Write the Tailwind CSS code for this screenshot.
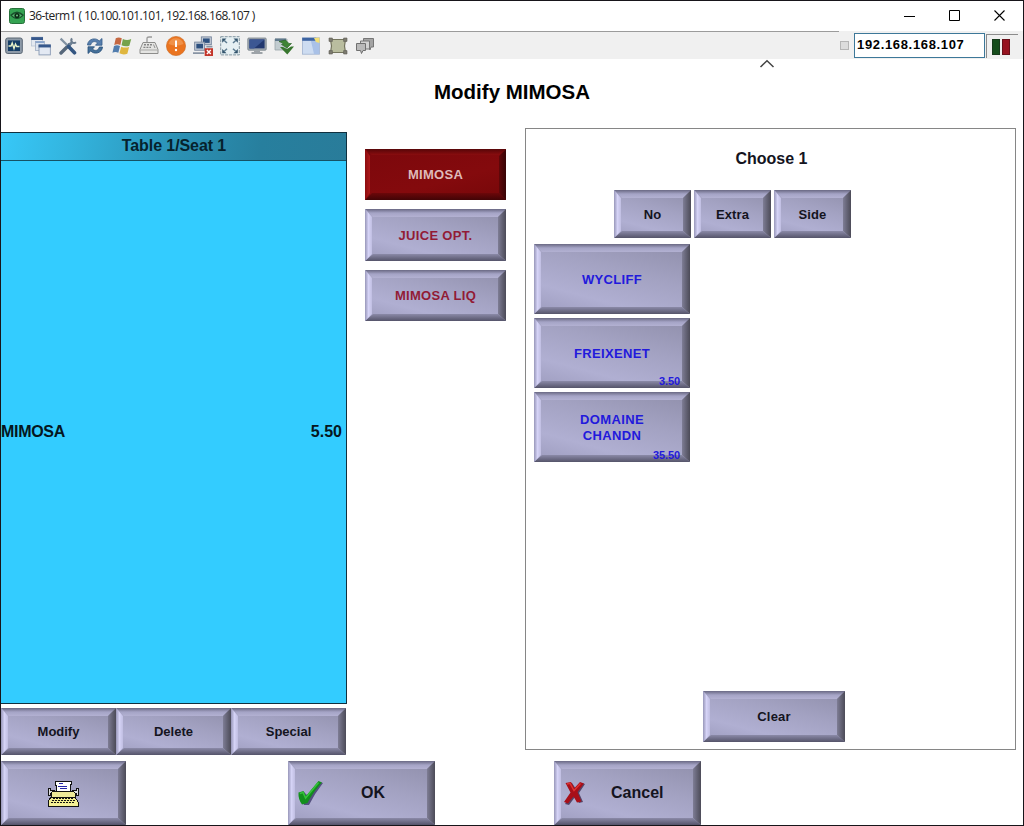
<!DOCTYPE html>
<html lang="en">
<head>
<meta charset="utf-8">
<title>36-term1</title>
<script src="https://cdn.jsdelivr.net/npm/@tailwindcss/browser@4"></script>
</head>
<body class="w-[1024px] h-[826px] overflow-hidden bg-white">
<div class="w-[1024px] h-[826px] border border-[#17151a] bg-white flex flex-col overflow-hidden font-['Liberation_Sans',Arial,sans-serif] text-[#14141e]">

  <!-- Window title bar -->
  <header class="h-[30px] shrink-0 flex items-center pl-2">
    <svg class="w-4 h-4 -mt-px" viewBox="0 0 16 16"><rect x=".5" y=".5" width="15" height="15" rx="2" fill="#35a352" stroke="#27713b"/><path d="M1 7Q8 0 15 7Q8 15 1 7Z" fill="#17512b"/><path d="M3 7.5Q8 3 13 7.5Q8 12 3 7.5Z" fill="#57b76f"/><circle cx="8" cy="7.5" r="2.6" fill="#0b2914"/><circle cx="8" cy="7.5" r="1" fill="#6bcb82"/></svg>
    <span class="ml-[4px] text-[12px] leading-4 tracking-[-0.57px] whitespace-pre text-[#222] font-['Open_Sans','Noto_Sans',sans-serif]">36-term1 ( 10.100.101.101, 192.168.168.107 )</span>
    <div class="ml-auto flex items-center mr-[18px] gap-[34px] -mt-[2px]">
      <svg class="w-[11px] h-[11px]" viewBox="0 0 11 11"><path d="M0 6.5H11" stroke="#000"/></svg>
      <svg class="w-[11px] h-[11px]" viewBox="0 0 11 11"><path d="M.5 .5H10.5V10.5H.5Z" fill="none" stroke="#000"/></svg>
      <svg class="w-[11px] h-[11px]" viewBox="0 0 11 11"><path d="M.5 .5L10.5 10.5M10.5 .5L.5 10.5" stroke="#000" stroke-width="1.1"/></svg>
    </div>
  </header>

  <!-- Toolbar -->
  <div class="h-[28px] shrink-0 bg-[#f0f0f0] flex">
    <div class="w-[838px] border-t border-[#9b9b9b] flex items-center pl-1 gap-[9px] [&>svg]:w-[18px] [&>svg]:h-[18px] [&>svg]:shrink-0">
      <svg viewBox="0 0 18 18"><rect x=".7" y="1" width="16.6" height="15.5" rx="2" fill="#8d9aa8" stroke="#5a6673"/><rect x="3" y="3.4" width="12" height="10.6" fill="#163e66"/><path d="M3.5 9H6L7.2 6L9 11.5L10.5 7L11.7 9.5H14.5" fill="none" stroke="#e8f2c8" stroke-width="1.4"/></svg>
      <svg class="!w-[20px] !h-[20px] -mx-px" viewBox="0 0 18 18"><rect x=".5" y="1" width="10" height="8" fill="#e4e9f0" stroke="#b8c4d2" stroke-width=".7"/><rect x=".2" y="1" width="10.6" height="2.6" fill="#36588c"/><rect x="4" y="5" width="8" height="8" fill="#dbe3ee" stroke="#9dabc0" stroke-width=".7"/><rect x="4" y="4.7" width="8" height="1.6" fill="#8aa6cc"/><rect x="7.2" y="8" width="10.2" height="9" fill="#e3e9f3" stroke="#8798b2" stroke-width=".8"/><rect x="6.8" y="7.7" width="11" height="2.6" fill="#36588c"/></svg>
      <svg viewBox="0 0 18 18"><path d="M2 16L10.5 7.5" stroke="#56677a" stroke-width="3.4" stroke-linecap="round"/><path d="M10 8.5L13 5.4" stroke="#6b7f94" stroke-width="2.8"/><path d="M13 1.3A3 3 0 0 0 13.2 5.2A3 3 0 0 0 17 5.2" fill="none" stroke="#6b7c8e" stroke-width="2"/><path d="M1.6 1.6L9 9" stroke="#8292a2" stroke-width="2.2"/><path d="M9.5 9.5L15.5 15.8" stroke="#345681" stroke-width="3.6" stroke-linecap="round"/></svg>
      <svg viewBox="0 0 18 18"><path d="M1.5 8C2 1.5 10 .2 13.2 4L16 1.5V8.2H9.5L11.5 6C9 3.5 5.5 4.5 4.6 8Z" fill="#587fae" stroke="#325a88" stroke-width=".8"/><path d="M16.5 10C16 16.5 8 17.8 4.8 14L2 16.5V9.8H8.5L6.5 12C9 14.5 12.5 13.5 13.4 10Z" fill="#457099" stroke="#264e78" stroke-width=".8"/></svg>
      <svg class="!w-[20px] !h-[20px] -mx-px" viewBox="0 0 18 18"><path d="M3.4 2Q6 .5 8.8 2L7.5 8Q5 6.7 2 8Z" fill="#c66842"/><path d="M9.8 2.6Q13.5 4.4 17.3 2.6L15.6 8.8Q12 10 8.6 8.4Z" fill="#75a24b"/><path d="M1.8 9Q4.5 7.7 7.2 9L5.7 15Q3 13.8 .4 15Z" fill="#527dae"/><path d="M8.3 9.6Q11.8 11 15.4 9.8L13.8 16Q10 17.3 6.7 15.6Z" fill="#dfb63f"/></svg>
      <svg class="!w-[20px] !h-[19px] -mx-px" viewBox="0 0 20 19"><path d="M8 6V2.5Q8 1 10 1H13" fill="none" stroke="#999" stroke-width="1.3"/><path d="M4 6.5H16L19 13.5V17.5H1V13.5Z" fill="#e4e4e2" stroke="#8d8d8b"/><path d="M1 14H19" stroke="#a9a9a7"/><path d="M5 8.8H13M4.4 11.4H12" stroke="#858585" stroke-width="1.4" stroke-dasharray="2 1"/><path d="M14.5 8.5L16 12" stroke="#909090"/></svg>
      <svg class="!w-[20px] !h-[20px] -mx-px" viewBox="0 0 20 20"><circle cx="10" cy="10" r="9.6" fill="#ea7420" stroke="#c9661f" stroke-width=".6"/><path d="M2.5 8A7.8 7.8 0 0 1 17.5 8Q10 11 2.5 8Z" fill="#f09148"/><path d="M10 4.5V11" stroke="#fff" stroke-width="2"/><circle cx="10" cy="14" r="1.2" fill="#fff"/></svg>
      <svg class="!w-[20px] !h-[20px] -mx-px" viewBox="0 0 18 18"><rect x="7.5" y=".8" width="9" height="7" fill="#c3cbd6" stroke="#74839a" stroke-width=".8"/><rect x="9" y="2.2" width="6" height="4" fill="#2d507f"/><rect x="1.5" y="5.5" width="9" height="7.3" fill="#c3cbd6" stroke="#74839a" stroke-width=".8"/><rect x="3" y="7" width="6" height="4.2" fill="#2d507f"/><path d="M0 15.5H10M12 9.5H17.5" stroke="#8894a4" stroke-width="1.6"/><rect x="10.5" y="11" width="7.5" height="7" fill="#c3362b"/><path d="M12.5 12.7L16 16.2M16 12.7L12.5 16.2" stroke="#fff" stroke-width="1.3"/></svg>
      <svg class="!w-[20px] !h-[20px] -mx-px" viewBox="0 0 20 20"><rect x=".7" y=".7" width="18.6" height="18.2" fill="#e6f0f3" stroke="#8296a0" stroke-dasharray="3 1"/><path d="M2.2 2.5H6.5L2.2 6.8ZM17.8 2.5H13.5L17.8 6.8ZM2.2 17.2H6.5L2.2 12.9ZM17.8 17.2H13.5L17.8 12.9Z" fill="#32536c"/><path d="M4 4.2L7 7M16 4.2L13 7M4 15.5L7 12.7M16 15.5L13 12.7" stroke="#5d7c91" stroke-width="1.5"/></svg>
      <svg class="!w-[20px] !h-[18px] -mx-px" viewBox="0 0 20 18"><rect x=".8" y="1" width="18.4" height="12.2" rx="1" fill="#a3abb3" stroke="#737d86" stroke-width=".8"/><rect x="2.4" y="2.4" width="15.2" height="9" fill="#22386f"/><path d="M2.4 2.4H17.6L7 11.4H2.4Z" fill="#3c5793"/><path d="M7 13.4H13V15H15.5V17H4.5V15H7Z" fill="#9da3a8"/></svg>
      <svg class="!w-[20px] !h-[18px] -mx-px" viewBox="0 0 20 18"><path d="M1 2H13V13H1Z" fill="#c2ccd0" stroke="#9ba5aa" stroke-width=".8"/><path d="M1 1.5H12V4H1Z" fill="#60798c"/><path d="M5 4.5L11.5 3L15 6.5H17.5L13 11L7.5 7.5H9.5L8 5.8Z" fill="#3e8435" stroke="#255d23" stroke-width=".6"/><path d="M6 10H9L13 12L17 9.5H20L13.3 17.5Z" fill="#38772f"/></svg>
      <svg viewBox="0 0 18 18"><rect x=".5" y=".8" width="17" height="16.4" fill="#cddcf1" stroke="#a0b2cf" stroke-width=".8"/><rect x=".2" y=".8" width="14" height="3" fill="#3d64a2"/><path d="M9 4H17V17H12Z" fill="#a9c1e7"/><path d="M12 1L17.5 .5V6L14 5Z" fill="#f3df75"/></svg>
      <svg class="!w-[20px] !h-[18px] -mx-px" viewBox="0 0 20 18"><path d="M2.5 2.5H17.5L16.5 9L17.5 15.5H2.5L3.5 9Z" fill="#b9bd9f" stroke="#73745d" stroke-width="1.2"/><path d="M1 1H4.4V4.4H1ZM15.6 1H19V4.4H15.6ZM1 13.6H4.4V17H1ZM15.6 13.6H19V17H15.6Z" fill="#7d7c71" stroke="#5e5d56" stroke-width=".6"/></svg>
      <svg viewBox="0 0 18 18"><path d="M7.5 1.5H17.5V10H15L14 13L12 10H7.5Z" fill="#a4a4a4" stroke="#777"/><path d="M4.5 4H13.5V12H4.5Z" fill="#d3d3d3" stroke="#777"/><path d="M.5 6.5H9.5V13.5H7L5.5 16.5L4.5 13.5H.5Z" fill="#b9b9b9" stroke="#707070"/></svg>
    </div>
    <div class="flex-1 flex pt-[2px]">
      <div class="w-[9px] h-[9px] mt-[8px] ml-px border border-[#b5b5b5] bg-[#dcdcdc]"></div>
      <div class="w-[131px] h-[25px] ml-[5px] border border-[#3d7899] bg-white pl-[2px] text-[13px] leading-[21px] font-bold tracking-[0.66px] text-black">192.168.168.107</div>
      <div class="w-[32px] h-[24px] mt-px ml-px border-t border-l border-[#8b8b8b] flex gap-[2px] pt-[4px] pl-[5px]">
        <div class="w-[8px] h-[16px] bg-[#164d1c] border border-[#173a1b]"></div>
        <div class="w-[8px] h-[16px] bg-[#971320] border border-[#68101a]"></div>
      </div>
    </div>
  </div>

  <!-- Order screen -->
  <div class="h-[68px] shrink-0 flex flex-col items-center">
    <svg class="w-[16px] h-[9px] ml-[510px]" viewBox="0 0 16 9"><path d="M1.5 8L8 1.7L14.5 8" fill="none" stroke="#444" stroke-width="1.5"/></svg>
    <h1 class="mt-[12px] text-[20.5px] leading-6 font-bold text-black">Modify MIMOSA</h1>
  </div>

  <main class="h-[634px] shrink-0 flex">
    <section class="w-[346px] pt-[5px] flex flex-col">
      <div class="h-[572px] border border-[#10303f] border-l-0 bg-[#33ccff] flex flex-col">
        <div class="h-[28px] shrink-0 border-b border-[#155266] bg-[linear-gradient(100deg,#37c8f8_0%,#33b5df_20%,#2b91b4_52%,#277f9e_75%,#297c9a_100%)] flex items-center justify-center">
          <span class="text-[16px] leading-5 font-bold tracking-[-0.08px] text-[#06222d] ml-px -mt-px">Table 1/Seat 1</span>
        </div>
        <div class="flex-1 flex items-center justify-between text-[16px] leading-5 font-bold pr-1 text-[#051620]"><span class="tracking-[-0.3px]">MIMOSA</span><span>5.50</span></div>
      </div>
      <div class="flex mt-[4px] h-[47px] text-[13px] tracking-[0px]">
        <button data-bevel class="relative w-[115px] flex items-center justify-center font-bold">Modify</button>
        <button data-bevel class="relative w-[115px] flex items-center justify-center font-bold">Delete</button>
        <button data-bevel class="relative w-[115px] flex items-center justify-center font-bold">Special</button>
      </div>
    </section>

    <nav class="w-[141px] ml-[18px] pt-[22px] flex flex-col gap-[9px] text-[13px] font-bold tracking-[0.3px] text-[#921b35]">
      <button data-bevel="red" class="relative h-[51px] flex items-center justify-center text-[#dfb9b9]">MIMOSA</button>
      <button data-bevel class="relative h-[52px] flex items-center justify-center">JUICE OPT.</button>
      <button data-bevel class="relative h-[51px] flex items-center justify-center">MIMOSA LIQ</button>
    </nav>

    <section class="w-[491px] h-[622px] mt-px ml-[19px] border border-[#868686] flex flex-col">
      <h2 class="mt-[20px] ml-[2px] text-center text-[16px] leading-5 font-bold">Choose 1</h2>
      <div class="mt-[21px] ml-[88px] flex gap-[3px] text-[13px] font-bold tracking-[0.1px]">
        <button data-bevel class="relative w-[77px] h-[48px] flex items-center justify-center">No</button>
        <button data-bevel class="relative w-[77px] h-[48px] flex items-center justify-center">Extra</button>
        <button data-bevel class="relative w-[77px] h-[48px] flex items-center justify-center">Side</button>
      </div>
      <div class="mt-[6px] ml-[8px] w-[156px] flex flex-col gap-[4px] text-[13px] leading-4 font-bold tracking-[0.35px] text-[#2219dc]">
        <button data-bevel class="relative h-[70px] flex items-center justify-center">WYCLIFF</button>
        <button data-bevel class="relative h-[70px] flex items-center justify-center">FREIXENET<span class="absolute z-10 right-[10px] bottom-0 text-[11px] leading-[13px] tracking-[-0.1px]">3.50</span></button>
        <button data-bevel class="relative h-[70px] flex items-center justify-center">DOMAINE<br>CHANDN<span class="absolute z-10 right-[10px] bottom-0 text-[11px] leading-[13px] tracking-[-0.1px]">35.50</span></button>
      </div>
      <button data-bevel class="relative mt-auto mb-[7px] ml-[177px] w-[142px] h-[51px] flex items-center justify-center text-[13px] font-bold tracking-[0.2px]">Clear</button>
    </section>
  </main>

  <footer class="flex-1 flex text-[16px] font-bold">
    <button data-bevel class="relative w-[125px] flex items-center justify-center">
      <svg class="w-[32px] h-[27px] -ml-px" viewBox="0 0 32 27" shape-rendering="crispEdges">
        <path d="M1 8H3V10H7V13H3V15H1ZM31 8H29V10H25V13H29V15H31Z" fill="#ddd" stroke="#111"/>
        <path d="M6 11H26L28 13V18H4V13Z" fill="#eeea98" stroke="#111"/>
        <path d="M9 1H24V4H23V11Q16 13 9 11V5H8V1Z" fill="#fff" stroke="#111"/><path d="M12 3.5H16M11 6.5H20M13 8.5H20" stroke="#2525a8"/>
        <path d="M4 17H28L31 22V26H1V22Z" fill="#f2ee91" stroke="#111"/>
        <path d="M6 18.5H27M5 20.5H28M4 22.5H28" stroke="#111" stroke-dasharray="2 1"/><path d="M2 24.5H30" stroke="#f6f19b"/>
      </svg>
    </button>
    <button data-bevel class="relative w-[147px] ml-[162px] flex items-center pl-[9px]">
      <svg class="w-[27px] h-[28px] shrink-0 -mt-[2px]" viewBox="0 0 27 28"><path d="M3 15L7 13L11 17L23 3L26 4Q18 14 12 26H7Q5 21 3 15Z" fill="#54507e"/><path d="M1.5 13.5L6.5 12L9 17L21.5 2L25 3.5Q16 13 10.5 24L5 25.5Q1 20 1.5 13.5Z" fill="#128f1c"/><path d="M2.8 14.5L6 13.4L8.6 19L21.5 3.5" fill="none" stroke="#35c23a" stroke-width="1.6"/></svg>
      <span class="ml-[37px] -mt-px">OK</span>
    </button>
    <button data-bevel class="relative w-[147px] ml-[119px] flex items-center pl-[9px]">
      <svg class="w-[24px] h-[26px] shrink-0 -mt-px" viewBox="0 0 24 26"><path d="M5 4L9 3L13 9L19 3L22 4L16 13L20 22L16 23L12 17L6 25L2 24L9 14Z" fill="#53466a"/><path d="M2.5 3L8 2L11.5 8L17 2L21 3.5L14.5 12L18.5 21.5L14 22.5L10.5 16.5L5 23.5L1 22L7.5 12.5Z" fill="#a80f19"/><path d="M4 4L7 3.4L11 10.5L17.5 3.5" fill="none" stroke="#dc3332" stroke-width="1.4"/></svg>
      <span class="ml-[24px] -mt-px">Cancel</span>
    </button>
  </footer>
</div>

<!-- Bevel faces and edges shared by every touch button -->
<template id="grey">
  <span class="absolute inset-0 z-0 bg-[linear-gradient(195deg,#8f8eaa_0%,#a3a2c2_40%,#b0afd2_72%,#9c9bbd_100%)]"></span>
  <span class="absolute inset-x-0 top-0 h-[8px] bg-linear-to-b from-[#6a6984] via-[#a5a4c6] to-[#b3b1d2] [clip-path:polygon(0_0,100%_0,calc(100%_-_8px)_100%,8px_100%)]"></span>
  <span class="absolute inset-x-0 bottom-0 h-[7px] bg-linear-to-b from-[#8b8aa8] to-[#55546a] [clip-path:polygon(8px_0,calc(100%_-_8px)_0,100%_100%,0_100%)]"></span>
  <span class="absolute inset-y-0 left-0 w-[7px] bg-linear-to-r from-[#9897b9] via-[#d5d3f6] to-[#c0bee2] [clip-path:polygon(0_0,100%_8px,100%_calc(100%_-_7px),0_100%)]"></span>
  <span class="absolute inset-y-0 right-0 w-[8px] bg-linear-to-r from-[#7e7d95] to-[#4c4b58] [clip-path:polygon(0_8px,100%_0,100%_100%,0_calc(100%_-_7px))]"></span>
</template>
<template id="red">
  <span class="absolute inset-0 z-0 bg-[linear-gradient(165deg,#7c080c_0%,#840a0d_60%,#760709_100%)]"></span>
  <span class="absolute inset-x-0 top-0 h-[6px] bg-linear-to-b from-[#570608] to-[#8a0d0f] [clip-path:polygon(0_0,100%_0,calc(100%_-_7px)_100%,7px_100%)]"></span>
  <span class="absolute inset-x-0 bottom-0 h-[7px] bg-linear-to-b from-[#6c0709] to-[#420406] [clip-path:polygon(7px_0,calc(100%_-_7px)_0,100%_100%,0_100%)]"></span>
  <span class="absolute inset-y-0 left-0 w-[5px] bg-linear-to-r from-[#8c0c0f] to-[#ad191b] [clip-path:polygon(0_0,100%_7px,100%_calc(100%_-_7px),0_100%)]"></span>
  <span class="absolute inset-y-0 right-0 w-[7px] bg-linear-to-r from-[#600709] to-[#370406] [clip-path:polygon(0_7px,100%_0,100%_100%,0_calc(100%_-_7px))]"></span>
</template>
<script>
document.querySelectorAll('[data-bevel]').forEach(function (b) {
  var label = document.createElement('span');
  label.className = 'relative z-10 flex items-center text-center pt-px';
  var price = b.querySelector(':scope > span.absolute');
  if (price) price.remove();
  if (b.querySelector('br')) label.className = 'relative z-10 block text-center pt-px';
  while (b.firstChild) label.appendChild(b.firstChild);
  b.appendChild(document.getElementById(b.dataset.bevel || 'grey').content.cloneNode(true));
  b.appendChild(label);
  if (price) b.appendChild(price);
});
</script>
</body>
</html>
